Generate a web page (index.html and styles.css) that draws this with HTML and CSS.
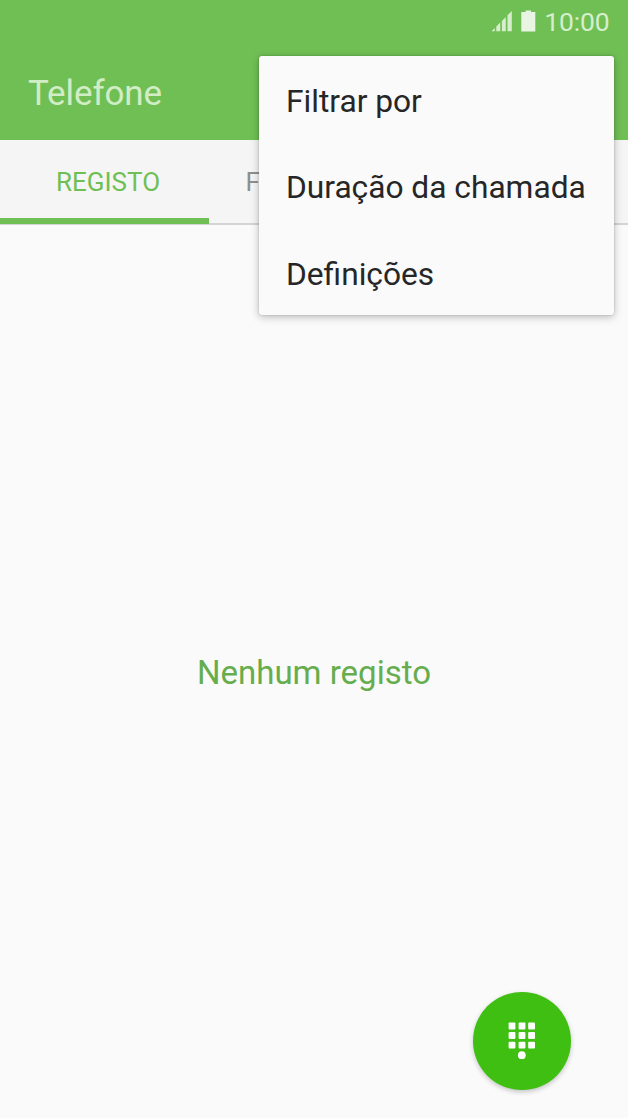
FILE: index.html
```html
<!DOCTYPE html>
<html lang="pt">
<head>
<meta charset="utf-8">
<title>Telefone</title>
<link rel="stylesheet" href="styles.css">
</head>
<body>
<div class="phone">
  <header class="header">
    <div class="status">
      <svg class="signal" width="22" height="22" viewBox="0 0 22 22">
        <path d="M0.5 21.3 3.8 18V21.3ZM5.3 21.3V16.5L9.2 12.6V21.3ZM10.9 21.3V10.9L14.8 7V21.3ZM16.5 21.3V5.3L20.8 1V21.3Z" fill="#d6eecd"/>
      </svg>
      <svg class="battery" width="15" height="22" viewBox="0 0 15 22">
        <path d="M4.6 0.5H10V2H14.3V21.5H0.3V2H4.6Z" fill="#e8f5e3"/>
      </svg>
      <span class="clock">10:00</span>
    </div>
    <h1 class="title">Telefone</h1>
  </header>
  <nav class="tabs">
    <div class="tab tab-active"><span class="tab-label">REGISTO</span></div>
    <div class="tab tab-covered"><span class="tab-label">F</span></div>
    <div class="tab"></div>
  </nav>
  <main class="content">
    <p class="empty">Nenhum registo</p>
  </main>
  <div class="menu">
    <div class="menu-item">Filtrar por</div>
    <div class="menu-item">Duração da chamada</div>
    <div class="menu-item">Definições</div>
  </div>
  <div class="fab">
    <svg width="28" height="38" viewBox="0 0 28 38" fill="#fff">
      <rect x="0.6" y="0.6" width="6.8" height="6.8" rx="1"/><rect x="10.6" y="0.6" width="6.8" height="6.8" rx="1"/><rect x="20.2" y="0.6" width="6.8" height="6.8" rx="1"/>
      <rect x="0.6" y="10.1" width="6.8" height="6.8" rx="1"/><rect x="10.6" y="10.1" width="6.8" height="6.8" rx="1"/><rect x="20.2" y="10.1" width="6.8" height="6.8" rx="1"/>
      <rect x="0.6" y="19.7" width="6.8" height="6.8" rx="1"/><rect x="10.6" y="19.7" width="6.8" height="6.8" rx="1"/><rect x="20.2" y="19.7" width="6.8" height="6.8" rx="1"/>
      <circle cx="13.8" cy="33.2" r="3.9"/>
    </svg>
  </div>
</div>
</body>
</html>
```
FILE: styles.css
```css
* { box-sizing: border-box; }
body { margin: 0; font-family: Roboto, sans-serif; background: #fafafa; }
.phone {
  position: relative;
  width: 628px;
  height: 1118px;
  overflow: hidden;
  display: flex;
  flex-direction: column;
  background: #fafafa;
}
.header { height: 140px; background: #70bf54; }
.status {
  display: flex;
  justify-content: flex-end;
  align-items: center;
  height: 44px;
  padding-right: 18.5px;
}
.signal { margin: -2px 8px 0 0; }
.battery { margin: -2px 8px 0 0; }
.clock { font-size: 26.5px; line-height: 44px; letter-spacing: -0.15px; color: #d6eecd; }
.title {
  margin: 0;
  padding: 1px 0 0 28px;
  font-size: 35px;
  font-weight: 400;
  line-height: 98px;
  letter-spacing: -0.1px;
  color: #d0edc5;
}
.tabs {
  display: grid;
  grid-template-columns: 209px 210px 209px;
  height: 85px;
  flex: none;
  background: #f5f5f5;
  border-bottom: 2px solid #d4d4d4;
}
.tab {
  height: 84px;
  display: flex;
  justify-content: center;
  color: #8f8f8f;
  font-size: 26px;
  line-height: 84px;
}
.tab-active {
  padding-left: 7px;
  color: #70bf54;
  border-bottom: 6px solid #70bf54;
}
.tab-covered { justify-content: flex-start; padding-left: 36.5px; }
.content {
  flex: 1;
  display: flex;
  justify-content: center;
  align-items: center;
}
.empty { margin: 0; padding-top: 2px; color: #66ad4e; font-size: 33px; line-height: 40px; }
.menu {
  position: absolute;
  left: 259px;
  top: 56px;
  width: 355px;
  height: 259px;
  display: grid;
  grid-template-rows: 86px 86px 87px;
  background: #fafafa;
  border-radius: 3px;
  box-shadow: 0 2px 8px rgba(0, 0, 0, .26), 0 0 2px rgba(0, 0, 0, .22);
}
.menu-item {
  display: flex;
  align-items: center;
  padding: 4px 0 0 27px;
  color: #262626;
  font-size: 31.7px;
  white-space: nowrap;
}
.menu-item:last-child { padding-top: 6px; }
.fab {
  position: absolute;
  left: 473px;
  top: 992px;
  width: 97.5px;
  height: 98px;
  display: flex;
  justify-content: center;
  align-items: center;
  border-radius: 50%;
  background: #3fbf12;
  box-shadow: 0 2px 5px rgba(0, 0, 0, .22);
}
```
